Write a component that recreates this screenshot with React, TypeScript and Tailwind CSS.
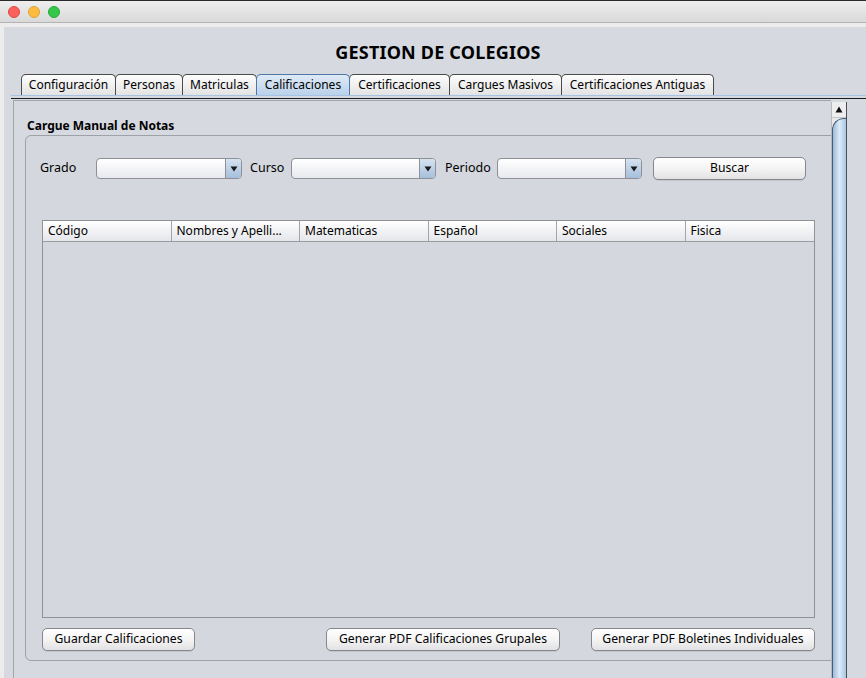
import React from "react";

const font = "font-['Lucida_Grande','Noto_Sans','DejaVu_Sans',sans-serif]";

function Tab({ label, w, selected, first }: { label: string; w: number; selected?: boolean; first?: boolean }) {
  return (
    <div
      style={{ width: w }}
      className={
        "h-[21px] flex items-center justify-center rounded-t-[5px] border border-b-0 text-[12px] text-black " +
        (first ? "" : "-ml-px ") +
        (selected
          ? "relative z-10 border-[#4f78a8] bg-gradient-to-b from-[#dfeaf6] to-[#b9d1ea]"
          : "border-[#4a4a4a] bg-gradient-to-b from-[#fdfdfd] to-[#e3e3e3]")
      }
    >
      {label}
    </div>
  );
}

function Combo({ w }: { w: number }) {
  return (
    <div
      style={{ width: w }}
      className="h-[21px] flex rounded-[4px] border border-[#8e9096] bg-gradient-to-b from-[#ffffff] to-[#e8e9ee] overflow-hidden"
    >
      <div className="flex-1" />
      <div className="w-[16px] border-l border-[#8e9096] bg-gradient-to-b from-[#d5e3f1] to-[#a6bfdb] flex items-center justify-center">
        <svg width="8" height="6" viewBox="0 0 8 6">
          <path d="M0.5 0.5 L7.5 0.5 L4 5.5 Z" fill="#1a1a1a" />
        </svg>
      </div>
    </div>
  );
}

function Btn({ label, w, className = "" }: { label: string; w: number; className?: string }) {
  return (
    <div
      style={{ width: w }}
      className={
        "h-[23px] flex items-center justify-center rounded-[5px] border border-[#85878c] bg-gradient-to-b from-[#ffffff] via-[#f4f4f4] to-[#e2e2e4] text-[12.2px] text-black shadow-[0_1px_0_rgba(0,0,0,0.08)] " +
        className
      }
    >
      {label}
    </div>
  );
}

export default function App() {
  const cols = ["Código", "Nombres y Apelli...", "Matematicas", "Español", "Sociales", "Fisica"];
  return (
    <div className={"w-[866px] h-[678px] overflow-hidden bg-[#ececec] flex flex-col " + font}>
      {/* title bar */}
      <div className="h-[23px] shrink-0 border-t border-[#2a2a2a] border-b border-b-[#b3b3b3] bg-gradient-to-b from-[#eeeeee] to-[#d9d9d9] flex items-center pl-[8px] gap-[8px]">
        <div className="w-[12px] h-[12px] rounded-full bg-[#fc605c] border border-[#de4a44]" />
        <div className="w-[12px] h-[12px] rounded-full bg-[#fdbc40] border border-[#dea236]" />
        <div className="w-[12px] h-[12px] rounded-full bg-[#34c84a] border border-[#27aa35]" />
      </div>
      <div className="flex-1 pl-[4px] pt-[4px] flex min-h-0">
        <div className="flex-1 bg-[#d6d9e0] flex flex-col min-h-0">
          {/* Heading */}
          <div className="h-[47px] shrink-0 flex justify-center pl-[6px] pt-[14px]">
            <div className="text-[18px] font-bold leading-[22px] text-black tracking-[0.2px]">GESTION DE COLEGIOS</div>
          </div>
          {/* tabs */}
          <div className="flex pl-[17px] shrink-0">
            <Tab label="Configuración" w={95} first />
            <Tab label="Personas" w={68} />
            <Tab label="Matriculas" w={75} />
            <Tab label="Calificaciones" w={94} selected />
            <Tab label="Certificaciones" w={101} />
            <Tab label="Cargues Masivos" w={113} />
            <Tab label="Certificaciones Antiguas" w={153} />
          </div>
          <div className="ml-[7px] h-px bg-[#a7c3e4] shrink-0" />
          <div className="ml-[7px] h-[2px] shrink-0" />
          <div className="ml-[7px] h-px bg-[#1c1c1c] shrink-0" />
          <div className="h-px shrink-0" />
          {/* scroll pane */}
          <div className="flex flex-1 min-h-0 ml-[9px]">
            <div className="w-[818px] border-t border-l border-[#a3a6ad] overflow-hidden relative">
              <div className="pl-[13px] pt-[17px] h-[34px] text-[12px] font-bold leading-[15px] text-black">
                Cargue Manual de Notas
              </div>
              <div className="ml-[11px] w-[830px] h-[526px] rounded-[6px] border border-[#9da1a8] bg-[#d4d7de] flex flex-col">
                <div className="mt-[21px] flex items-center h-[23px] pl-[14px] text-[12.5px] text-black">
                  <div className="w-[56px]">Grado</div>
                  <Combo w={146} />
                  <div className="ml-[8px] w-[41px]">Curso</div>
                  <Combo w={145} />
                  <div className="ml-[9px] w-[52px]">Periodo</div>
                  <Combo w={145} />
                  <Btn label="Buscar" w={153} className="ml-[11px]" />
                </div>
                <div className="mt-[40px] ml-[16px] w-[773px] h-[398px] border border-[#8e9196] flex flex-col">
                  <div className="h-[21px] grid grid-cols-6 border-b border-[#9a9ca2] bg-gradient-to-b from-[#ffffff] to-[#e5e6ea]">
                    {cols.map((c, i) => (
                      <div
                        key={c}
                        className={"flex items-center pl-[5px] text-[12px] text-black " + (i < 5 ? "border-r border-[#a3a5aa]" : "")}
                      >
                        {c}
                      </div>
                    ))}
                  </div>
                  <div className="flex-1" />
                </div>
                <div className="mt-[10px] ml-[16px] flex">
                  <Btn label="Guardar Calificaciones" w={153} />
                  <Btn label="Generar PDF Calificaciones Grupales" w={234} className="ml-[131px]" />
                  <Btn label="Generar PDF Boletines Individuales" w={224} className="ml-[31px]" />
                </div>
              </div>
            </div>
            {/* scrollbar */}
            <div className="w-[16px] mt-[2px] border-l border-[#b6b9bf] border-r border-r-[#4b4e55] bg-[#e9e9e9] flex flex-col">
              <div className="h-[16px] flex items-center justify-center border-b border-[#c4c6ca] bg-[#eeeeee]">
                <svg width="8" height="7" viewBox="0 0 8 7">
                  <path d="M4 0.5 L7.5 6.5 L0.5 6.5 Z" fill="#111" />
                </svg>
              </div>
              <div className="flex-1 rounded-tl-[12px] border-l border-t border-[#4a5d78] bg-gradient-to-r from-[#9fbbd8] via-[#dcebf8] to-[#aac6e2]" />
            </div>
            <div className="flex-1" />
          </div>
        </div>
      </div>
    </div>
  );
}
